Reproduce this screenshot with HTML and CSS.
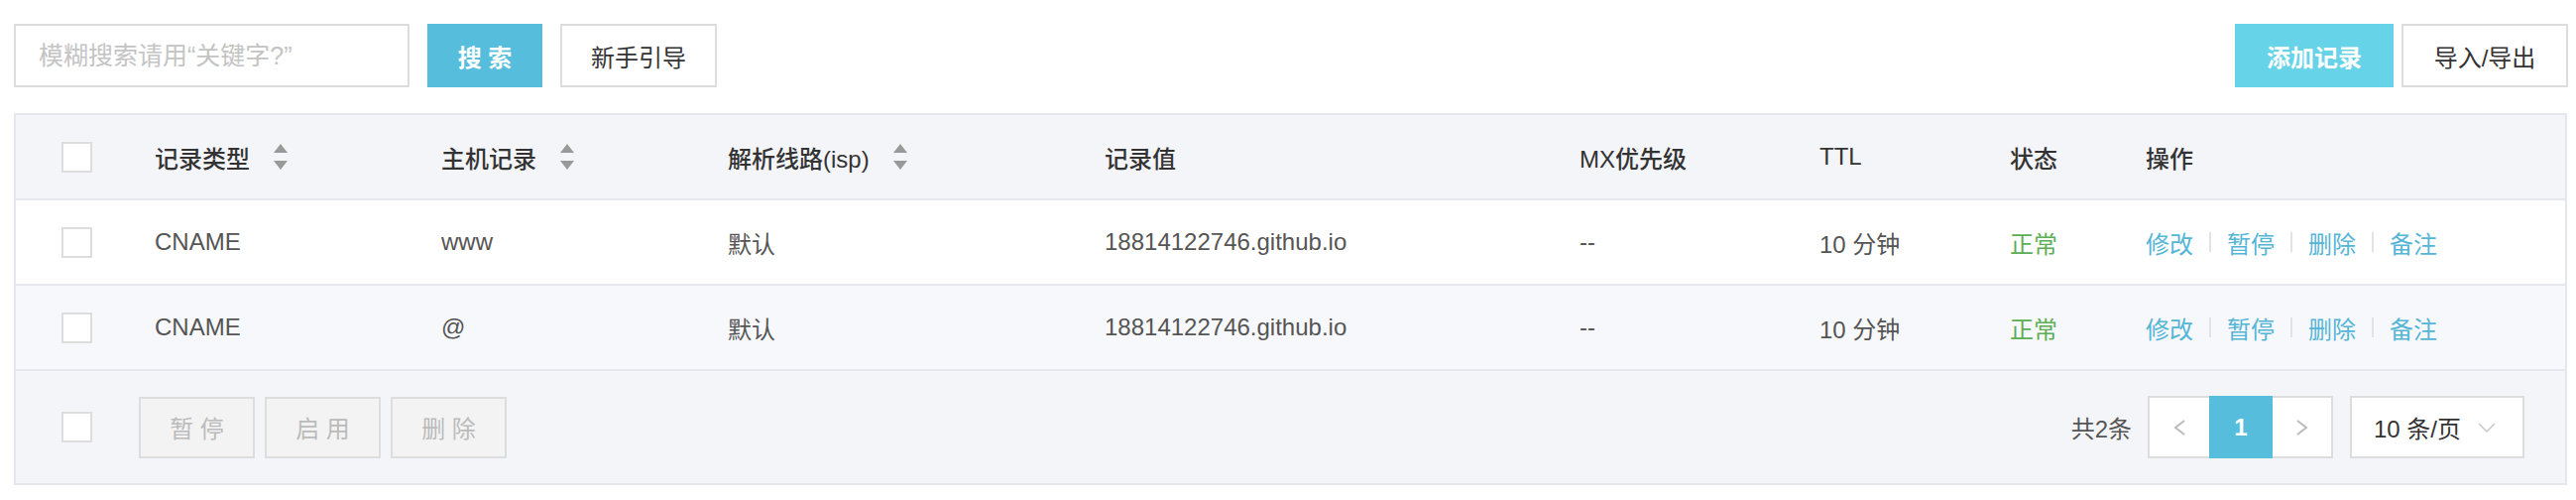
FILE: index.html
```html
<!DOCTYPE html>
<html lang="zh-CN">
<head>
<meta charset="utf-8">
<title>解析记录</title>
<link rel="stylesheet" href="styles.css">
</head>
<body>
<div class="page">
  <div class="toolbar">
    <div class="tool-group">
      <input class="search-input" type="text" placeholder="模糊搜索请用“关键字?”">
      <button class="btn btn-primary btn-search">搜 索</button>
      <button class="btn btn-default btn-guide">新手引导</button>
    </div>
    <div class="tool-group tool-right">
      <button class="btn btn-add">添加记录</button>
      <button class="btn btn-default btn-io">导入/导出</button>
    </div>
  </div>

  <div class="table">
    <div class="row head">
      <div class="cell cell-check"><span class="checkbox"></span></div>
      <div class="cell">记录类型<svg class="sort" viewBox="0 0 14 26" width="14" height="26"><polygon points="7,0 14,9 0,9"/><polygon points="0,17 14,17 7,26"/></svg></div>
      <div class="cell">主机记录<svg class="sort" viewBox="0 0 14 26" width="14" height="26"><polygon points="7,0 14,9 0,9"/><polygon points="0,17 14,17 7,26"/></svg></div>
      <div class="cell">解析线路(isp)<svg class="sort" viewBox="0 0 14 26" width="14" height="26"><polygon points="7,0 14,9 0,9"/><polygon points="0,17 14,17 7,26"/></svg></div>
      <div class="cell">记录值</div>
      <div class="cell">MX优先级</div>
      <div class="cell">TTL</div>
      <div class="cell">状态</div>
      <div class="cell">操作</div>
    </div>

    <div class="row">
      <div class="cell cell-check"><span class="checkbox"></span></div>
      <div class="cell">CNAME</div>
      <div class="cell">www</div>
      <div class="cell">默认</div>
      <div class="cell">18814122746.github.io</div>
      <div class="cell">--</div>
      <div class="cell">10 分钟</div>
      <div class="cell status-ok">正常</div>
      <div class="cell ops">
        <a class="op">修改</a><span class="sep"></span><a class="op">暂停</a><span class="sep"></span><a class="op">删除</a><span class="sep"></span><a class="op">备注</a>
      </div>
    </div>

    <div class="row row-hover">
      <div class="cell cell-check"><span class="checkbox"></span></div>
      <div class="cell">CNAME</div>
      <div class="cell">@</div>
      <div class="cell">默认</div>
      <div class="cell">18814122746.github.io</div>
      <div class="cell">--</div>
      <div class="cell">10 分钟</div>
      <div class="cell status-ok">正常</div>
      <div class="cell ops">
        <a class="op">修改</a><span class="sep"></span><a class="op">暂停</a><span class="sep"></span><a class="op">删除</a><span class="sep"></span><a class="op">备注</a>
      </div>
    </div>

    <div class="table-foot">
      <div class="foot-left">
        <span class="checkbox"></span>
        <div class="batch">
          <button class="btn btn-disabled">暂 停</button>
          <button class="btn btn-disabled">启 用</button>
          <button class="btn btn-disabled">删 除</button>
        </div>
      </div>
      <div class="foot-right">
        <span class="total">共2条</span>
        <div class="pager">
          <span class="pg pg-prev"><svg viewBox="0 0 12 16" width="12" height="16"><polyline points="11,1 2,8 11,15"/></svg></span>
          <span class="pg pg-active">1</span>
          <span class="pg pg-next"><svg viewBox="0 0 12 16" width="12" height="16"><polyline points="1,1 10,8 1,15"/></svg></span>
        </div>
        <div class="size-select">
          <span>10 条/页</span>
          <svg viewBox="0 0 18 10" width="18" height="10"><polyline points="1,1 9,9 17,1"/></svg>
        </div>
      </div>
    </div>
  </div>
</div>
</body>
</html>
```

FILE: styles.css
```css
html, body {
  margin: 0;
  padding: 0;
  background: #ffffff;
}

body {
  font-family: "Liberation Sans", "Noto Sans CJK SC", sans-serif;
  font-size: 24px;
  color: #555555;
}

.page {
  padding: 24px 8px 0 14px;
}

/* toolbar */
.toolbar {
  display: flex;
  justify-content: space-between;
  height: 64px;
}

.tool-group {
  display: flex;
  gap: 18px;
}

.tool-right {
  gap: 8px;
}

.search-input {
  box-sizing: border-box;
  width: 399px;
  height: 64px;
  margin: 0;
  border: 2px solid #dddddd;
  padding: 0 0 0 23px;
  font-family: "Liberation Sans", "Noto Sans CJK SC", sans-serif;
  font-size: 25px;
  color: #333333;
  outline: none;
  background: #ffffff;
}

.search-input::placeholder {
  color: #c4c4c4;
}

.btn {
  box-sizing: border-box;
  height: 64px;
  margin: 0;
  padding: 0;
  border: 2px solid transparent;
  border-radius: 0;
  font-family: "Liberation Sans", "Noto Sans CJK SC", sans-serif;
  font-size: 24px;
  cursor: pointer;
}

.btn-primary {
  background: #56bedc;
  border-color: #56bedc;
  color: #ffffff;
  font-weight: bold;
}

.btn-search {
  width: 116px;
}

.btn-default {
  background: #ffffff;
  border-color: #dddddd;
  color: #333333;
}

.btn-guide {
  width: 158px;
}

.btn-add {
  width: 160px;
  background: #66d3e8;
  border-color: #66d3e8;
  color: #ffffff;
  font-weight: bold;
}

.btn-io {
  width: 168px;
}

/* table */
.table {
  margin-top: 26px;
  margin-right: 1px;
  border: 2px solid #e6e7ec;
}

.row {
  display: grid;
  grid-template-columns: 140px 289px 289px 380px 479px 242px 192px 137px 1fr;
  align-items: center;
  height: 84px;
  border-bottom: 2px solid #e6e7ec;
  background: #ffffff;
}

.row.head {
  background: #f4f5f9;
  color: #333333;
  font-weight: 500;
}

.row.row-hover {
  background: #f7f8fb;
}

.cell {
  display: flex;
  align-items: center;
  white-space: nowrap;
}

.cell-check {
  padding-left: 46px;
}

.checkbox {
  display: inline-block;
  box-sizing: border-box;
  width: 31px;
  height: 31px;
  border: 2px solid #dddddd;
  background: #ffffff;
}

.sort {
  margin-left: 24px;
  fill: #999999;
}

.status-ok {
  color: #5cae55;
}

.ops {
  gap: 16px;
}

.op {
  color: #55b5d6;
  text-decoration: none;
  cursor: pointer;
}

.sep {
  display: inline-block;
  width: 2px;
  height: 20px;
  background: #e3e3e3;
}

/* footer */
.table-foot {
  display: flex;
  justify-content: space-between;
  align-items: center;
  height: 113px;
  padding: 0 41px 0 46px;
  background: #f4f5f9;
}

.foot-left {
  display: flex;
  align-items: center;
  gap: 47px;
}

.batch {
  display: flex;
  gap: 10px;
}

.btn-disabled {
  width: 117px;
  height: 62px;
  background: #f3f3f3;
  border-color: #dddddd;
  color: #bbbbbb;
  cursor: default;
}

.foot-right {
  display: flex;
  align-items: center;
}

.total {
  color: #555555;
  margin-right: 16px;
}

.pager {
  display: flex;
  height: 63px;
  margin-right: 17px;
}

.pg {
  box-sizing: border-box;
  display: flex;
  align-items: center;
  justify-content: center;
  height: 63px;
  background: #ffffff;
}

.pg svg {
  fill: none;
  stroke: #bbbbbb;
  stroke-width: 2;
}

.pg-prev {
  width: 62px;
  border: 2px solid #dddddd;
  border-right: none;
}

.pg-next {
  width: 61px;
  border: 2px solid #dddddd;
  border-left: none;
}

.pg-active {
  width: 64px;
  background: #56bedc;
  color: #ffffff;
  font-weight: bold;
}

.size-select {
  box-sizing: border-box;
  display: flex;
  align-items: center;
  justify-content: space-between;
  width: 176px;
  height: 63px;
  padding: 0 27px 0 22px;
  border: 2px solid #dddddd;
  background: #ffffff;
  color: #333333;
}

.size-select svg {
  fill: none;
  stroke: #c8c8c8;
  stroke-width: 1.5;
}
```
